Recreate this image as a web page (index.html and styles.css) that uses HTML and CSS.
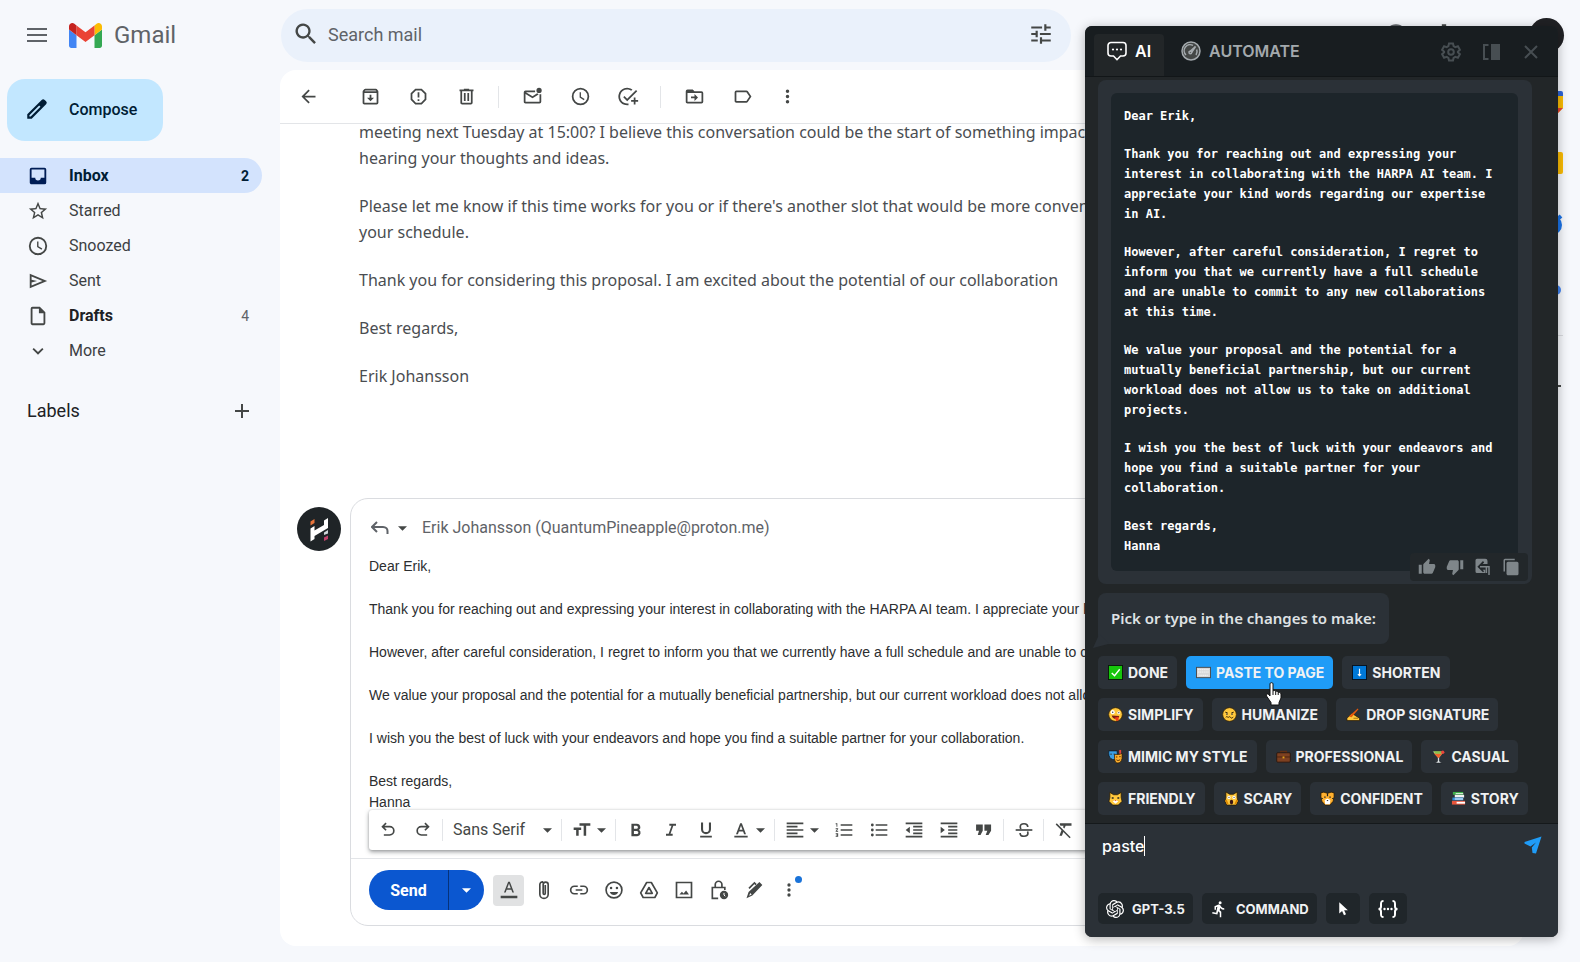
FILE: index.html
```html
<!DOCTYPE html>
<html lang="en">
<head>
<meta charset="utf-8">
<title>Gmail</title>
<link rel="stylesheet" href="styles.css">
</head>
<body>
<svg class="sprite" aria-hidden="true">
  <symbol id="caret" viewBox="0 0 10 5"><path d="M0 0h10L5 5z"/></symbol>
  <symbol id="clock" viewBox="0 0 24 24"><path d="M12 2a10 10 0 1 0 0 20 10 10 0 0 0 0-20zm0 18a8 8 0 1 1 0-16 8 8 0 0 1 0 16zm.5-13H11v6l4.8 3.2.9-1.4-4.2-2.5z"/></symbol>
  <symbol id="more" viewBox="0 0 24 24"><path d="M12 8a2 2 0 1 0 0-4 2 2 0 0 0 0 4zm0 2a2 2 0 1 0 0 4 2 2 0 0 0 0-4zm0 6a2 2 0 1 0 0 4 2 2 0 0 0 0-4z"/></symbol>
  <symbol id="thumb" viewBox="0 0 24 24"><path d="M1 21h4V9H1zm22-11c0-1.1-.9-2-2-2h-6.3l.95-4.6.03-.3c0-.4-.17-.8-.44-1.1L14.2 1 7.6 7.6C7.2 7.9 7 8.4 7 9v10c0 1.1.9 2 2 2h9c.8 0 1.5-.5 1.8-1.2l3-7c.1-.3.2-.5.2-.8z"/></symbol>
</svg>

<div class="app">
  <header class="topbar">
    <div class="brand">
      <button class="icon-btn menu-btn" aria-label="Main menu"><svg viewBox="0 0 20 14" width="20" height="14"><path d="M0 0h20v2H0zm0 6h20v2H0zm0 6h20v2H0z"/></svg></button>
      <svg class="gmail-logo" viewBox="52 42 88 66"><path fill="#4285f4" d="M58 108h14V74L52 59v43c0 3.3 2.7 6 6 6"/><path fill="#34a853" d="M120 108h14c3.3 0 6-2.7 6-6V59l-20 15"/><path fill="#fbbc04" d="M120 48v26l20-15v-8c0-7.4-8.5-11.7-14.4-7.2"/><path fill="#ea4335" d="M72 74V48l24 18 24-18v26L96 92"/><path fill="#c5221f" d="M52 51v8l20 15V48l-5.6-4.2C60.5 39.3 52 43.600 52 51"/></svg>
      <span class="brand-name">Gmail</span>
    </div>
    <div class="search">
      <svg viewBox="0 0 24 24" width="28" height="28"><path d="M15.5 14h-.8l-.3-.3A6.500 6.500 0 1 0 13.700 14.400l.3.3v.8l5 5 1.500-1.500zm-6 0a4.500 4.500 0 1 1 0-9 4.500 4.500 0 0 1 0 9z"/></svg>
      <input type="text" placeholder="Search mail" aria-label="Search mail">
      <button class="icon-btn" aria-label="Search options"><svg viewBox="0 0 24 24" width="26" height="26"><path d="M3 17v2h6v-2zM3 5v2h10V5zm10 16v-2h8v-2h-8v-2h-2v6zM7 9v2H3v2h4v2h2V9zm14 4v-2H11v2zm-6-4h2V7h4V5h-4V3h-2z"/></svg></button>
    </div>
    <div class="account">
      <svg viewBox="0 0 24 24" width="26" height="26"><circle cx="12" cy="12" r="9" fill="none" stroke="#5f6368" stroke-width="2"/><path d="M11 16h2v2h-2zM12 6a4 4 0 0 0-4 4h2a2 2 0 1 1 4 0c0 2-3 1.800-3 5h2c0-2.200 3-2.500 3-5a4 4 0 0 0-4-4z"/></svg>
      <svg viewBox="0 0 24 24" width="26" height="26"><path d="M10 2h4v3h-4zm0 17h4v3h-4z"/><circle cx="12" cy="12" r="6" fill="none" stroke="#5f6368" stroke-width="2"/></svg>
      <span class="account-photo"></span>
    </div>
  </header>

  <nav class="sidebar">
    <button class="compose"><svg viewBox="0 0 24 24" width="26" height="26"><path d="M20.400 4.900 19.100 3.600a2 2 0 0 0-2.800 0L3 16.900V21h4.100L20.400 7.700a2 2 0 0 0 0-2.800zM6.200 19H5v-1.200l9-9L15.200 10z"/></svg>Compose</button>
    <ul class="folders">
      <li><a class="folder active" href="#"><svg viewBox="0 0 24 24"><path d="M19 3H5a2 2 0 0 0-2 2v14c0 1.100.9 2 2 2h14a2 2 0 0 0 2-2V5a2 2 0 0 0-2-2zm0 11h-4a3 3 0 0 1-6 0H5V5h14z"/></svg><span>Inbox</span><b>2</b></a></li>
      <li><a class="folder" href="#"><svg viewBox="0 0 24 24"><path d="m22 9.200-7.200-.6L12 2 9.200 8.600 2 9.200l5.500 4.700L5.800 21 12 17.300 18.200 21l-1.600-7.100zM12 15.400l-3.800 2.300 1-4.300-3.300-2.900 4.400-.4L12 6.100l1.700 4 4.400.4-3.300 2.900 1 4.300z"/></svg><span>Starred</span></a></li>
      <li><a class="folder" href="#"><svg><use href="#clock"/></svg><span>Snoozed</span></a></li>
      <li><a class="folder" href="#"><svg viewBox="0 0 24 24"><path d="M3 4v16l19-8zm2 3 11.800 5L5 17v-3.500l6-1.500-6-1.500z"/></svg><span>Sent</span></a></li>
      <li><a class="folder strong" href="#"><svg viewBox="0 0 24 24"><path d="M14 2H6a2 2 0 0 0-2 2v16c0 1.100.9 2 2 2h12a2 2 0 0 0 2-2V8zm4 18H6V4h7v5h5z"/></svg><span>Drafts</span><b>4</b></a></li>
      <li><a class="folder" href="#"><svg viewBox="0 0 24 24"><path d="M16.600 8.600 12 13.200 7.400 8.600 6 10l6 6 6-6z"/></svg><span>More</span></a></li>
    </ul>
    <div class="labels"><h2>Labels</h2><button class="icon-btn" aria-label="Create new label"><svg viewBox="0 0 14 14" width="14" height="14"><path d="M6 0h2v6h6v2H8v6H6V8H0V6h6z"/></svg></button></div>
  </nav>

  <main class="thread">
    <div class="toolbar">
      <button class="tool back" aria-label="Back"><svg viewBox="0 0 24 24"><path d="M20 11H7.800l5.600-5.600L12 4l-8 8 8 8 1.400-1.400L7.800 13H20z"/></svg></button>
      <button class="tool" aria-label="Archive"><svg viewBox="0 0 24 24"><path d="m20.500 5.200-1.400-1.700A1.500 1.500 0 0 0 18 3H6c-.5 0-.9.200-1.200.6L3.500 5.200c-.3.400-.5.800-.5 1.300V19c0 1.100.9 2 2 2h14a2 2 0 0 0 2-2V6.500c0-.5-.2-.9-.5-1.300zM6.200 5h11.600l.8 1H5.400zM5 19V8h14v11zm6-9h2v3.500h3L12 17.500l-4-4h3z"/></svg></button>
      <button class="tool" aria-label="Report spam"><svg viewBox="0 0 24 24"><path d="M8.300 3h7.400L21 8.300v7.400L15.700 21H8.300L3 15.700V8.300zm.8 2L5 9.100v5.800L9.100 19h5.800l4.100-4.100V9.100L14.900 5zM11 7h2v6h-2zm0 8h2v2h-2z"/></svg></button>
      <button class="tool" aria-label="Delete"><svg viewBox="0 0 24 24"><path d="M15 4V3H9v1H4v2h1v13c0 1.100.9 2 2 2h10a2 2 0 0 0 2-2V6h1V4zm2 15H7V6h10zM9 8h2v9H9zm4 0h2v9h-2z"/></svg></button>
      <i class="rule"></i>
      <button class="tool" aria-label="Mark as unread"><svg viewBox="0 0 24 24"><path d="M15 5H4a2 2 0 0 0-2 2v11c0 1.100.9 2 2 2h16a2 2 0 0 0 2-2V9.500h-2V18H4V9l8 5 7-4.400-1.700-1.300L12 11.700 4.500 7H15z"/><circle cx="19.500" cy="5" r="3"/></svg></button>
      <button class="tool" aria-label="Snooze"><svg><use href="#clock"/></svg></button>
      <button class="tool" aria-label="Add to tasks"><svg viewBox="0 0 24 24"><path d="M10.500 20a8 8 0 1 1 4.600-14.500l1.400-1.400A10 10 0 1 0 12 21.900V20zM22 5.900 20.600 4.500 10.500 14.600 7.400 11.500 6 12.900l4.500 4.500zM18 13v3h-3v2h3v3h2v-3h3v-2h-3v-3z"/></svg></button>
      <i class="rule"></i>
      <button class="tool" aria-label="Move to"><svg viewBox="0 0 24 24"><path d="M20 6h-8l-2-2H4a2 2 0 0 0-2 2v12c0 1.100.9 2 2 2h16a2 2 0 0 0 2-2V8a2 2 0 0 0-2-2zm0 12H4V8h16zm-8-1 4-4-4-4v3H8v2h4z"/></svg></button>
      <button class="tool" aria-label="Labels"><svg viewBox="0 0 24 24"><path d="M16.500 5H5a2 2 0 0 0-2 2v10c0 1.100.9 2 2 2h11.500c.6 0 1.100-.3 1.500-.8l4.200-6.200L18 5.800c-.4-.5-.9-.8-1.500-.8zm0 12H5V7h11.500l3.400 5z"/></svg></button>
      <button class="tool last" aria-label="More"><svg><use href="#more"/></svg></button>
    </div>

    <div class="scroll">
      <article class="message">
        <p>meeting next Tuesday at 15:00? I believe this conversation could be the start of something impactful<br>hearing your thoughts and ideas.</p>
        <p>Please let me know if this time works for you or if there's another slot that would be more convenient<br>your schedule.</p>
        <p>Thank you for considering this proposal. I am excited about the potential of our collaboration</p>
        <p>Best regards,</p>
        <p>Erik Johansson</p>
      </article>

      <section class="reply-row">
        <svg class="avatar" viewBox="0 0 44 44"><circle cx="22" cy="22" r="22" fill="#1f2427"/><path d="M13.500 14.500 17.500 12v4l-4 2.500z" fill="#e8743b"/><path d="M13.500 21.500 17.500 19v4.500L27 18v-4.500l4-2.500V21l-13.500 8v3l-4 2.500z" fill="#fff"/><path d="M27 25.500 31 23v3.500L27 28z" fill="#cfd6da"/><path d="M27 30.500 31 28.500v3.500L27 34z" fill="#c2406b"/></svg>
        <div class="reply">
          <div class="recipient">
            <button class="icon-btn reply-type" aria-label="Type of response"><svg viewBox="0 0 18 14" width="18" height="14"><path d="M6 1 1 6l5 5M1.500 6H12c3 0 4.500 2 4.500 4v3" fill="none" stroke="#5f6368" stroke-width="2"/></svg><svg class="caret"><use href="#caret"/></svg></button>
            <span>Erik Johansson (QuantumPineapple@proton.me)</span>
          </div>
          <div class="draft">
            <p>Dear Erik,</p>
            <p>Thank you for reaching out and expressing your interest in collaborating with the HARPA AI team. I appreciate your kind words regarding our expertise in AI.</p>
            <p>However, after careful consideration, I regret to inform you that we currently have a full schedule and are unable to commit to any new collaborations.</p>
            <p>We value your proposal and the potential for a mutually beneficial partnership, but our current workload does not allow us to take on projects.</p>
            <p>I wish you the best of luck with your endeavors and hope you find a suitable partner for your collaboration.</p>
            <p>Best regards,<br>Hanna</p>
          </div>
          <div class="format-wrap">
          <div class="format">
            <button class="fmt" aria-label="Undo"><svg viewBox="0 0 24 24"><path d="M7 19v-2h7a4 4 0 0 0 0-8H7.800l2.600 2.600L9 13 4 8l5-5 1.400 1.400L7.800 7H14a6 6 0 0 1 0 12z"/></svg></button>
            <button class="fmt" aria-label="Redo"><svg viewBox="0 0 24 24"><path d="M17 19v-2h-7a4 4 0 0 1 0-8h6.200l-2.600 2.600L15 13l5-5-5-5-1.400 1.400L16.200 7H10a6 6 0 0 0 0 12z"/></svg></button>
            <i class="fmt-rule"></i>
            <label class="font-pick"><select aria-label="Font"><option>Sans Serif</option></select><svg class="caret"><use href="#caret"/></svg></label>
            <i class="fmt-rule"></i>
            <button class="fmt wide" aria-label="Size"><svg viewBox="0 0 24 24"><path d="M9 4v3h5v12h3V7h5V4zM2 12h3v7h3v-7h3V9H2z"/></svg><svg class="caret"><use href="#caret"/></svg></button>
            <i class="fmt-rule"></i>
            <button class="fmt" aria-label="Bold"><svg viewBox="0 0 24 24"><path d="M15.600 11.800c1-.7 1.600-1.800 1.600-2.800A4.500 4.500 0 0 0 12.800 4.500H6.500v15h7a4.200 4.200 0 0 0 2.100-7.700zM9.500 7h3a1.800 1.800 0 0 1 0 3.600h-3zm3.500 9.800H9.500v-3.700H13a1.850 1.850 0 0 1 0 3.700z"/></svg></button>
            <button class="fmt" aria-label="Italic"><svg viewBox="0 0 24 24"><path d="M10 4.500V7h2.600l-3.400 9.500H6V19h8v-2.500h-2.600L14.800 7H18V4.500z"/></svg></button>
            <button class="fmt" aria-label="Underline"><svg viewBox="0 0 24 24"><path d="M12 17a6 6 0 0 0 6-6V3h-2.500v8a3.500 3.500 0 0 1-7 0V3H6v8a6 6 0 0 0 6 6zm-7 2v2h14v-2z"/></svg></button>
            <button class="fmt wide" aria-label="Text colour"><svg viewBox="0 0 24 24"><path d="M4 19h16v2H4zM11 4 6 17h2.300l1.200-3.200h5L15.700 17H18L13 4zm-.8 7.800L12 6.900l1.800 4.900z"/></svg><svg class="caret"><use href="#caret"/></svg></button>
            <i class="fmt-rule"></i>
            <button class="fmt wide" aria-label="Align"><svg viewBox="0 0 24 24"><path d="M2 3h20v2H2zm0 4h13v2H2zm0 4h20v2H2zm0 4h13v2H2zm0 4h20v2H2z"/></svg><svg class="caret"><use href="#caret"/></svg></button>
            <button class="fmt" aria-label="Numbered list"><svg viewBox="0 0 24 24"><path d="M2 17h2v.5H3v1h1v.5H2v1h3v-4H2zm1-9h1V4H2v1h1zm-1 3h1.800L2 13.100v.9h3v-1H3.200L5 10.900V10H2zm6-6v2h14V5zm0 14h14v-2H8zm0-6h14v-2H8z"/></svg></button>
            <button class="fmt" aria-label="Bulleted list"><svg viewBox="0 0 24 24"><path d="M8 5h14v2H8zm0 6h14v2H8zm0 6h14v2H8z"/><circle cx="4" cy="6" r="1.700"/><circle cx="4" cy="12" r="1.700"/><circle cx="4" cy="18" r="1.700"/></svg></button>
            <button class="fmt" aria-label="Indent less"><svg viewBox="0 0 24 24"><path d="M2 3h20v2H2zm9 4h11v2H11zm0 4h11v2H11zm0 4h11v2H11zm-9 4h20v2H2zM2 12l5 4V8z"/></svg></button>
            <button class="fmt" aria-label="Indent more"><svg viewBox="0 0 24 24"><path d="M2 3h20v2H2zm9 4h11v2H11zm0 4h11v2H11zm0 4h11v2H11zm-9 4h20v2H2zM7 12 2 8v8z"/></svg></button>
            <button class="fmt" aria-label="Quote"><svg viewBox="0 0 24 24"><path d="M4.500 18h3.300l2.700-5V5.500h-8V13H6zm9.500 0h3.300l3.200-5V5.500h-8V13H16z"/></svg></button>
            <i class="fmt-rule"></i>
            <button class="fmt" aria-label="Strikethrough"><svg viewBox="0 0 24 24"><path d="M2 11h20v2H2z"/><path d="M16.500 8.500C16.500 6 14.500 4.500 12 4.500S7.500 6 7.500 8.300c0 1 .4 1.800 1.100 2.400M7.300 15.500c0 2.500 2.200 4 4.700 4s4.700-1.300 4.700-3.600c0-.8-.2-1.500-.6-2" fill="none" stroke="#444746" stroke-width="2"/></svg></button>
            <i class="fmt-rule"></i>
            <button class="fmt" aria-label="Remove formatting"><svg viewBox="0 0 24 24"><path d="M7 4v2l1 1h3.500l-.7 1.700 1.700 1.600L14 7h7V4zM3.300 4 2 5.300l7 7L6.500 19h3l1.700-4.500 7.500 7.500 1.300-1.300z"/></svg></button>
          </div>
          </div>
          <div class="actions">
            <div class="send-group"><button class="send">Send</button><button class="send-more" aria-label="More send options"><svg class="caret"><use href="#caret"/></svg></button></div>
            <button class="act on" aria-label="Formatting options"><svg viewBox="0 0 24 24"><path d="M2 19h20v3H2zM11 2 6 15h2l1.200-3.200h5.600L16 15h2L13 2zm-1.100 8L12 4.300l2.100 5.700z"/></svg></button>
            <button class="act" aria-label="Attach files"><svg viewBox="0 0 24 24"><path d="M7 6v11a5 5 0 0 0 10 0V6M17 7V5.500a3 3 0 0 0-6 0V16a1.200 1.200 0 0 0 2.500 0V6M7 7V5.500A3.500 3.500 0 0 1 11 2.200" fill="none" stroke="#444746" stroke-width="2"/></svg></button>
            <button class="act" aria-label="Insert link"><svg viewBox="0 0 24 24"><path d="M10.500 7.500H6.500a4.500 4.500 0 0 0 0 9h4M13.500 7.500h4a4.500 4.500 0 0 1 0 9h-4M8 12h8" fill="none" stroke="#444746" stroke-width="2"/></svg></button>
            <button class="act" aria-label="Insert emoji"><svg viewBox="0 0 24 24"><circle cx="12" cy="12" r="9.500" fill="none" stroke="#444746" stroke-width="2"/><circle cx="8.500" cy="9.500" r="1.500"/><circle cx="15.500" cy="9.500" r="1.500"/><path d="M12 18c2.300 0 4.300-1.500 5-3.700H7A5.400 5.400 0 0 0 12 18z"/></svg></button>
            <button class="act" aria-label="Insert from Drive"><svg viewBox="0 0 24 24"><path d="M9.200 3h5.600L22 15.500 19 21H5l-3-5.500zM12 9l-4 7h8z" fill="none" stroke="#444746" stroke-width="2" stroke-linejoin="round"/></svg></button>
            <button class="act" aria-label="Insert photo"><svg viewBox="0 0 24 24"><path d="M3 3h18v18H3z" fill="none" stroke="#444746" stroke-width="2"/><path d="M6.500 17.500 9.500 14l2 2.200 3-3.700 3.500 5z"/></svg></button>
            <button class="act" aria-label="Confidential mode"><svg viewBox="0 0 24 24"><path d="M11 22H4V9h15v3M7.500 9V5.500a4 4 0 0 1 8 0V9" fill="none" stroke="#444746" stroke-width="2"/><circle cx="18" cy="18" r="5"/><path d="M18 15.500V18l1.500 1.500" fill="none" stroke="#fff" stroke-width="1.200"/></svg></button>
            <button class="act" aria-label="Insert signature"><svg viewBox="0 0 24 24"><path d="m18.500 2.500 3.500 3.500-12 12.500L3 22l2.500-7.500zM7.500 15.500l-1.300 3.300 3-1.300z" fill-rule="evenodd"/><path d="M6 10l6.500-6.500 2 2" fill="none" stroke="#444746" stroke-width="2"/></svg></button>
            <button class="act" aria-label="More options"><svg><use href="#more"/></svg><i class="dot"></i></button>
          </div>
        </div>
      </section>
    </div>
  </main>

  <aside class="rail">
    <svg viewBox="0 0 22 22"><path fill="#fbbc04" d="M0 4h22v13l-5 5H0z"/><path fill="#2f66d8" d="M0 0h20a2 2 0 0 1 2 2v3H0z"/><path fill="#ea4335" d="M17 22v-5h5z"/></svg>
    <svg viewBox="0 0 22 22"><rect width="22" height="22" rx="2" fill="#fbbc04"/></svg>
    <svg viewBox="0 0 22 22"><circle cx="11" cy="12" r="8" fill="none" stroke="#1a73e8" stroke-width="4"/><path d="M12 10l8-7" stroke="#1a73e8" stroke-width="4"/></svg>
    <svg class="person" viewBox="0 0 22 12"><rect y="1" width="20" height="10" rx="5" fill="#4285f4"/></svg>
    <hr>
    <svg viewBox="0 0 22 22"><path d="M10 2h2v8h8v2h-8v8h-2v-8H2v-2h8z"/></svg>
  </aside>
</div>

<section class="harpa" aria-label="HARPA AI">
  <header class="harpa-head">
    <button class="tab current"><svg viewBox="0 0 20 20"><path d="M4 1.500h12a3 3 0 0 1 3 3V12a3 3 0 0 1-3 3h-2.500L10 18.700 6.500 15H4a3 3 0 0 1-3-3V4.500a3 3 0 0 1 3-3z" fill="none" stroke="#fff" stroke-width="1.600"/><circle cx="6" cy="8.500" r="1.100" fill="#fff"/><circle cx="10" cy="8.500" r="1.100" fill="#fff"/><circle cx="14" cy="8.500" r="1.100" fill="#fff"/></svg>AI</button>
    <button class="tab"><svg viewBox="0 0 20 20" fill="none" stroke="#a3a9ad" stroke-width="1.500"><circle cx="10" cy="10" r="9"/><path d="M5 14A6 6 0 0 1 12 4.400M15.700 8.500a6 6 0 0 1-.7 5.500"/><path d="m8.500 10.800 6-5.300-4.300 6.700z" fill="#a3a9ad"/><circle cx="9.300" cy="11.500" r="1.300"/></svg>AUTOMATE</button>
    <div class="head-tools">
      <button class="head-btn" aria-label="Settings"><svg viewBox="0 0 20 20"><path d="M8 1.500h4l.6 2.600 1.700 1 2.600-.8 2 3.500-2 1.800v.8l2 1.800-2 3.500-2.600-.8-1.700 1-.6 2.600H8l-.6-2.600-1.700-1-2.600.8-2-3.500 2-1.800v-.8l-2-1.800 2-3.500 2.600.8 1.700-1z"/><circle cx="10" cy="10" r="2.800"/></svg></button>
      <button class="head-btn" aria-label="Dock to side"><svg viewBox="0 0 20 20"><path d="M7.500 3H3v14h4.500"/><path d="M11 3h7v14h-7z" fill="#474e52"/></svg></button>
      <button class="head-btn" aria-label="Close"><svg viewBox="0 0 20 20"><path d="m4 4 12 12M16 4 4 16"/></svg></button>
    </div>
  </header>

  <div class="chat">
    <div class="bubble">
      <div class="answer">
        <p>Dear Erik,</p>
        <p>Thank you for reaching out and expressing your<br>interest in collaborating with the HARPA AI team. I<br>appreciate your kind words regarding our expertise<br>in AI.</p>
        <p>However, after careful consideration, I regret to<br>inform you that we currently have a full schedule<br>and are unable to commit to any new collaborations<br>at this time.</p>
        <p>We value your proposal and the potential for a<br>mutually beneficial partnership, but our current<br>workload does not allow us to take on additional<br>projects.</p>
        <p>I wish you the best of luck with your endeavors and<br>hope you find a suitable partner for your<br>collaboration.</p>
        <p>Best regards,<br>Hanna</p>
      </div>
      <div class="answer-tools">
        <button aria-label="Good answer"><svg><use href="#thumb"/></svg></button>
        <button aria-label="Bad answer"><svg class="flip"><use href="#thumb"/></svg></button>
        <button aria-label="Insert"><svg viewBox="0 0 24 24"><path d="M4 1h11a3 3 0 0 1 3 3v4h-6.500l2-2L12 4 4.500 11.500 12 19l1.500-1.500-2-2H15V20H4a2 2 0 0 1-2-2V3a2 2 0 0 1 2-2z"/><path d="M8 11.700h12v11M16.500 12v8" fill="none" stroke="#7f868a" stroke-width="2"/></svg></button>
        <button aria-label="Copy"><svg viewBox="0 0 24 24"><path d="M17 1H4a2 2 0 0 0-2 2v15h2V3h13zm3 4H8a2 2 0 0 0-2 2v14c0 1.100.9 2 2 2h12a2 2 0 0 0 2-2V7a2 2 0 0 0-2-2z"/></svg></button>
      </div>
    </div>

    <div class="prompt">Pick or type in the changes to make:</div>

    <div class="chips">
      <div class="chip-row">
        <button class="chip"><svg viewBox="0 0 16 16"><rect x=".5" y=".5" width="15" height="15" fill="#16c60c" stroke="#0a1a0a"/><path d="m4 8.500 3 3 5.500-7" fill="none" stroke="#fff" stroke-width="1.500"/></svg>DONE</button>
        <button class="chip hot"><svg viewBox="0 0 16 16"><rect x=".5" y="2.500" width="15" height="11" fill="#d9d9d9" stroke="#4a4a4a"/><path d="M2 5h12M2 7.500h12M3.500 11h9" stroke="#f7f7f7" stroke-dasharray="1.500 .5"/></svg>PASTE TO PAGE
          <svg class="pointer" viewBox="0 0 18 24"><path d="M5 1.800C5 .3 8 .3 8 1.800V9c.5-.8 2.600-.6 2.700.5.7-.6 2.400-.2 2.500 1 .8-.6 2.800-.1 2.800 1.500V16l-2 4.500V23H6v-2.500L1.500 14c-1-1.500.8-2.800 2-1.500L5 14z" fill="#fff" stroke="#111"/><path d="M8 9v4m2.700-3.500V13m2.500-2.500V13" stroke="#111" fill="none"/></svg></button>
        <button class="chip"><svg viewBox="0 0 16 16"><rect x=".5" y=".5" width="15" height="15" fill="#0078d7" stroke="#06121f"/><path d="M8 4v7M6.300 9.700 8 11.500l1.700-1.800" fill="none" stroke="#fff" stroke-width="1.200"/></svg>SHORTEN</button>
      </div>
      <div class="chip-row">
        <button class="chip"><svg viewBox="0 0 16 16"><circle cx="8" cy="8" r="7.300" fill="#ffc83d" stroke="#3b2600" stroke-width=".8"/><circle cx="5" cy="5.500" r="2.200" fill="#fff"/><circle cx="11.500" cy="6" r="1.600" fill="#fff"/><circle cx="5" cy="5.500" r=".8"/><circle cx="11.500" cy="6" r=".7"/><path d="M4 9l8 .5c-.5 2-1.500 3-3 3.200C6.500 13 4.500 11.500 4 9z" fill="#7a1c10"/><path d="M7 11.500l4-1 .5 3.500-2.500 1z" fill="#f03a17"/></svg>SIMPLIFY</button>
        <button class="chip"><svg viewBox="0 0 16 16"><circle cx="8" cy="8" r="7.300" fill="#ffc83d" stroke="#3b2600" stroke-width=".8"/><path d="M3.500 5.500 6 6.300M12.500 5.500 10 6.300M4 11c1-1.500 2 0 2.700 0s1.300-1.500 2.300 0 2 .8 3-.5" fill="none" stroke="#2b1c00"/><circle cx="5.300" cy="7.500" r=".9"/><circle cx="10.700" cy="7.500" r=".9"/></svg>HUMANIZE</button>
        <button class="chip"><svg viewBox="0 0 16 16"><path d="M1 14.500V12l5-5 3 1.500 5.500 3.500v2.500z" fill="#ffc83d" stroke="#2a1a00" stroke-width=".8"/><path d="M3 10 12.500 1.500l.8.800L6 11z" fill="#e8590c"/><path d="M8 12h5" stroke="#8a5a00" stroke-width=".8"/></svg>DROP SIGNATURE</button>
      </div>
      <div class="chip-row">
        <button class="chip"><svg viewBox="0 0 16 16"><path d="M.8 2h9v5.500C9 11 6.500 11.500 5 11.200 2.500 10.500.8 8 .8 5z" fill="#3aa0e8" stroke="#0b1a26" stroke-width=".8"/><path d="M7 5.500c2.500.8 5 .5 8-.8V10c-.5 3-2.500 5-4.500 5S7 13 7 10z" fill="#ffb02e" stroke="#2a1a00" stroke-width=".8"/><path d="M9 11.500c1 1 3 1 4-.5M8.500 8.500H10m2-.3h1.500M2.500 5.500H4m2 0h1" fill="none" stroke="#402300"/><path d="M13 1v4" stroke="#e8443b" stroke-width="2"/></svg>MIMIC MY STYLE</button>
        <button class="chip"><svg viewBox="0 0 16 16"><path d="M5 4.500v-2h6v2" fill="none" stroke="#5d2f16" stroke-width="1.400"/><rect x=".8" y="4" width="14.400" height="10" rx="1" fill="#7d4021" stroke="#20100a" stroke-width=".8"/><path d="M1 8.500h14" stroke="#4a2210"/><rect x="7" y="8" width="2" height="2" fill="#e3a21a"/></svg>PROFESSIONAL</button>
        <button class="chip"><svg viewBox="0 0 16 16"><path d="M1.500 2.500h12.500L9 9v4l2.500 2h-7L7 13V9z" fill="#e9eef0" stroke="#20242a" stroke-width=".7"/><path d="M3 4.500h9.500L8 9.800z" fill="#f4622a"/><path d="M2.500 2.500h9v2.500h-7z" fill="#8bc34a"/><circle cx="12.500" cy="3.500" r="1.800" fill="#e8443b"/></svg>CASUAL</button>
      </div>
      <div class="chip-row">
        <button class="chip"><svg viewBox="0 0 16 16"><path d="M2 1.500 6 4h4l4-2.500V7l1 4-4 4H5l-4-4 1-4z" fill="#ffc83d" stroke="#2a1a00" stroke-width=".8"/><path d="M4 7.500h2M10 7.500h2" stroke="#222" stroke-width="1.500"/><path d="M5 11l3-1.500 3 1.500-3 2.500z" fill="#fff"/><path d="M7 9.500h2L8 11z" fill="#e8443b"/></svg>FRIENDLY</button>
        <button class="chip"><svg viewBox="0 0 16 16"><path d="M2 1 6 3.500h4L14 1v6l1 4-2 4H3l-2-4 1-4z" fill="#ffc83d" stroke="#2a1a00" stroke-width=".8"/><circle cx="5.300" cy="6.800" r="1.700" fill="#fff"/><circle cx="10.700" cy="6.800" r="1.700" fill="#fff"/><circle cx="5.300" cy="6.800" r=".6"/><circle cx="10.700" cy="6.800" r=".6"/><ellipse cx="8" cy="11.800" rx="1.800" ry="2.600" fill="#3a1616"/><path d="M2 9.500 4 14M14 9.500 12 14" stroke="#e08a00" stroke-width="1.800"/></svg>SCARY</button>
        <button class="chip"><svg viewBox="0 0 16 16"><path d="M1 2l3-.8L8 2.500l4-1.300 3 .8v4l-1 5-3.500 4h-5L2 11 1 6z" fill="#ffb02e" stroke="#2a1a00" stroke-width=".8"/><path d="M5 9.500 8 8l3 1.500-.5 4.500h-5z" fill="#fff"/><path d="M4.500 6.500h1.500M10 6.500h1.500M8 2.500v3M1.500 8H3M13 8h1.500" stroke="#222" stroke-width="1.300"/><path d="M7 9.500h2L8 11z" fill="#222"/></svg>CONFIDENT</button>
        <button class="chip"><svg viewBox="0 0 16 16"><path d="M2 1h11v3H2z" fill="#3fae49"/><path d="M4 4h10v3H4z" fill="#f2f2f2"/><path d="M1.500 7H13v3H1.500z" fill="#2f8fdd"/><path d="M4 8h9v1H4zM5 2h8v1H5z" fill="#fff"/><path d="M1 10.500h14v4H1z" fill="#e8553b"/><path d="M6 11.500h9v2H6z" fill="#fff"/></svg>STORY</button>
      </div>
    </div>
  </div>

  <footer class="ask">
    <div class="ask-line"><input class="ask-input" type="text" value="paste" aria-label="Message">
      <button class="ask-send" aria-label="Send message"><svg viewBox="0 0 18 18"><path d="M17.500.500 12 17.500 8.500 17 7.800 11.500 12 6.500 6.500 10.500.500 7.500.500 6z" fill="#1f9cf7"/></svg></button></div>
    <div class="ask-tools">
      <button class="tool-chip"><svg viewBox="0 0 24 24"><path d="M22.282 9.821a5.985 5.985 0 0 0-.516-4.910 6.046 6.046 0 0 0-6.510-2.900A6.065 6.065 0 0 0 4.981 4.182a5.985 5.985 0 0 0-3.998 2.900 6.046 6.046 0 0 0 .743 7.097 5.980 5.980 0 0 0 .511 4.911 6.051 6.051 0 0 0 6.515 2.900A5.985 5.985 0 0 0 13.260 24a6.056 6.056 0 0 0 5.772-4.206 5.989 5.989 0 0 0 3.998-2.900 6.056 6.056 0 0 0-.748-7.073zm-9.022 12.608a4.476 4.476 0 0 1-2.876-1.041l.142-.080 4.778-2.758a.795.795 0 0 0 .393-.681v-6.737l2.020 1.169a.071.071 0 0 1 .038.052v5.583a4.504 4.504 0 0 1-4.495 4.494zm-9.661-4.125a4.471 4.471 0 0 1-.535-3.014l.142.085 4.783 2.758a.771.771 0 0 0 .781 0l5.843-3.369v2.332a.080.080 0 0 1-.033.062L9.740 19.950a4.499 4.499 0 0 1-6.141-1.646zM2.341 7.896a4.485 4.485 0 0 1 2.366-1.973V11.600a.766.766 0 0 0 .388.677l5.814 3.354-2.020 1.169a.076.076 0 0 1-.071 0l-4.830-2.787A4.504 4.504 0 0 1 2.341 7.872zm16.596 3.856L13.104 8.364 15.119 7.200a.076.076 0 0 1 .071 0l4.830 2.791a4.494 4.494 0 0 1-.677 8.104v-5.677a.790.790 0 0 0-.407-.667zm2.011-3.023l-.142-.085-4.774-2.782a.776.776 0 0 0-.785 0L9.409 9.230V6.897a.066.066 0 0 1 .028-.062l4.830-2.787a4.499 4.499 0 0 1 6.680 4.660zM8.307 12.863l-2.020-1.164a.080.080 0 0 1-.038-.057V6.074a4.499 4.499 0 0 1 7.376-3.454l-.142.081L8.704 5.459a.795.795 0 0 0-.393.681zm1.098-2.365l2.602-1.500 2.607 1.500v2.999l-2.597 1.500-2.607-1.500Z"/></svg>GPT-3.5</button>
      <button class="tool-chip"><svg viewBox="0 0 24 24"><path d="M13.500 5.500a2 2 0 1 0 0-4 2 2 0 0 0 0 4zM9.900 19.400l1-4.400 2.100 2v6h2v-7.500l-2.100-2 .6-3A7.300 7.300 0 0 0 19 13v-2a4.900 4.900 0 0 1-4.300-2.400l-1-1.600c-.4-.6-1-1-1.700-1-.3 0-.5.1-.8.100L6 8.300V13h2V9.600l1.800-.7L8.200 17l-4.900-1-.4 2z"/></svg>COMMAND</button>
      <button class="tool-chip" aria-label="Select element"><svg viewBox="0 0 24 24"><path d="M7 3v15l3.800-3.400 2.500 5.700 2.700-1.200-2.500-5.600h5z"/></svg></button>
      <button class="tool-chip" aria-label="Parameters"><svg class="braces" viewBox="0 0 22 20"><path d="M6.500 2C4 2 4 3 4 5v2.500C4 9 3.300 10 1.500 10 3.300 10 4 11 4 12.500V15c0 2 0 3 2.500 3M15.500 2C18 2 18 3 18 5v2.500c0 1.500.7 2.500 2.500 2.500-1.800 0-2.500 1-2.500 2.500V15c0 2 0 3-2.500 3" fill="none" stroke="#fff" stroke-width="2"/><circle cx="7.500" cy="10" r="1.200"/><circle cx="11" cy="10" r="1.200"/><circle cx="14.500" cy="10" r="1.200"/></svg></button>
    </div>
  </footer>
</section>
</body>
</html>
```
FILE: styles.css
```css
* { box-sizing: border-box; }
body {
  margin: 0;
  background: #f6f8fc;
  color: #3c4043;
  font-family: Roboto, "Liberation Sans", sans-serif;
  font-size: 16px;
  overflow: hidden;
}
button, input, select { font: inherit; color: inherit; border: 0; background: none; padding: 0; margin: 0; }
button { cursor: pointer; }
p, h2, ul { margin: 0; padding: 0; font-weight: inherit; }
a { color: inherit; text-decoration: none; }
svg { fill: #444746; flex: none; display: block; }
.sprite { position: absolute; width: 0; height: 0; }
.icon-btn { display: flex; align-items: center; justify-content: center; }
.caret { width: 9px; height: 5px; }

.app {
  display: grid;
  grid-template-columns: 280px minmax(0, 1fr) 56px;
  grid-template-rows: 70px minmax(0, 1fr);
  height: 100vh;
  padding-bottom: 16px;
}

/* Top bar */
.topbar { grid-column: 1 / -1; display: flex; align-items: center; }
.brand { width: 281px; display: flex; align-items: center; padding-left: 27px; }
.menu-btn { margin-right: 22px; }
.menu-btn svg { fill: #5f6368; }
.gmail-logo { width: 33px; height: 25px; }
.brand-name { margin-left: 12px; font-size: 24px; color: #5f6368; }
.search {
  display: flex;
  align-items: center;
  gap: 8px;
  width: 50%;
  height: 53px;
  padding: 0 17px 2px 11px;
  border-radius: 27px;
  background: #eaf1fb;
}
.search input { flex: 1; font-size: 18px; outline: 0; }
.search input::placeholder { color: #5f6368; opacity: 1; }
.account { flex: 1; display: flex; align-items: center; justify-content: flex-end; gap: 22px; padding-right: 16px; }
.account-photo { width: 35px; height: 35px; margin-left: 50px; border-radius: 50%; background: #202124; }

/* Sidebar */
.sidebar { padding: 9px 18px 0 0; }
.compose {
  display: flex;
  align-items: center;
  gap: 19px;
  height: 62px;
  margin: 0 0 17px 7px;
  padding: 0 26px 2px 17px;
  border-radius: 18px;
  background: #c2e7ff;
  color: #001d35;
  font-weight: 500;
}
.compose svg { fill: #001d35; }
.folders { list-style: none; }
.folder {
  display: flex;
  align-items: center;
  height: 35px;
  padding: 0 13px 0 27px;
  border-radius: 0 18px 18px 0;
}
.folder svg { width: 22px; height: 22px; margin-right: 20px; }
.folder span { flex: 1; }
.folder b { font-size: 14px; font-weight: 400; }
.active { background: #d3e3fd; color: #001d35; font-weight: 700; }
.active svg { fill: #001d55; }
.active b { font-weight: 700; }
.strong { color: #202124; font-weight: 700; }
.strong b { color: #5f6368; }
.labels { display: flex; align-items: center; justify-content: space-between; padding: 31px 13px 0 27px; }
.labels h2 { font-size: 18px; line-height: 24px; color: #202124; }

/* Thread card */
.thread {
  display: flex;
  flex-direction: column;
  min-height: 0;
  border-radius: 16px;
  background: #fff;
  overflow: hidden;
}
.toolbar { display: flex; align-items: center; height: 54px; padding-left: 4px; border-bottom: 1px solid #e3e5e8; flex: none; }
.tool { width: 48px; height: 40px; display: flex; align-items: center; justify-content: center; }
.tool svg { width: 21px; height: 21px; }
.back { margin-right: 14px; }
.last { width: 42px; }
.rule { width: 1px; height: 22px; margin: 0 9px 0 8px; background: #e3e5e8; }
.scroll { flex: 1; min-height: 0; display: flex; flex-direction: column; overflow: hidden; padding-bottom: 20px; }
.message {
  margin-top: -5px;
  padding: 0 0 109px 79px;
  font: 16px/26px "Noto Sans", "Open Sans", sans-serif;
  color: #4a4d51;
  white-space: nowrap;
}
.message p + p { margin-top: 22px; }

/* Reply */
.reply-row { flex: 1; display: flex; gap: 9px; min-height: 0; padding: 0 20px 0 17px; }
.avatar { width: 44px; height: 44px; margin-top: 9px; }
.reply {
  flex: 1;
  min-width: 0;
  display: flex;
  flex-direction: column;
  border: 1px solid #dadce0;
  border-radius: 18px;
}
.recipient { display: flex; align-items: center; gap: 15px; padding: 18px 0 0 20px; line-height: 22px; color: #5f6368; }
.reply-type { gap: 9px; }
.draft {
  flex: 1;
  min-height: 0;
  overflow: hidden;
  padding: 17px 18px 0;
  font: 14px/21px "Liberation Sans", Arial, sans-serif;
  color: #2c2e30;
}
.draft p + p { margin-top: 22px; }
.format-wrap { padding: 0 12px 8px 18px; border-bottom: 1px solid #e3e5e8; }
.format {
  display: flex;
  align-items: center;
  height: 40px;
  padding-left: 1px;
  border-radius: 3px;
  background: #fff;
  box-shadow: 0 2px 4px rgba(60, 64, 67, .5), 0 0 2px rgba(60, 64, 67, .2);
}
.fmt { width: 35px; height: 32px; display: flex; align-items: center; justify-content: center; gap: 5px; }
.fmt svg { width: 20px; height: 20px; }
.fmt .caret, .font-pick .caret { width: 9px; height: 5px; }
.wide { width: 49px; }
.fmt-rule { width: 1px; height: 22px; margin: 0 2px; background: #e3e5e8; }
.font-pick { display: flex; align-items: center; padding: 0 7px 0 8px; }
.font-pick select { appearance: none; width: 90px; line-height: 22px; color: #444746; }

.actions { display: flex; align-items: center; padding: 11px 18px 15px; }
.send-group { display: flex; height: 40px; margin-right: 9px; border-radius: 20px; overflow: hidden; background: #0b57d0; color: #fff; }
.send { width: 79px; font-weight: 700; }
.send-more { width: 36px; display: flex; align-items: center; justify-content: center; border-left: 1px solid #06327a; }
.send-more svg { fill: #fff; }
.act { position: relative; width: 35px; height: 31px; display: flex; align-items: center; justify-content: center; }
.act svg { width: 20px; height: 20px; }
.on { width: 31px; margin-right: 2px; border-radius: 4px; background: #e1e2e3; }
.dot { position: absolute; top: 1px; right: 4px; width: 7px; height: 7px; border-radius: 50%; background: #1a73d9; }

/* Side rail */
.rail { display: flex; flex-direction: column; align-items: center; gap: 39px; padding-top: 21px; }
.rail svg { width: 22px; height: 22px; }
.rail .person { height: 12px; margin-top: 10px; }
.rail hr { width: 22px; margin: 0; border: 0; border-top: 1px solid #dadce0; }

/* Floating assistant */
.harpa {
  position: absolute;
  top: 26px;
  right: 22px;
  bottom: 25px;
  width: 473px;
  display: flex;
  flex-direction: column;
  border-radius: 7px;
  overflow: hidden;
  background: #222628;
  box-shadow: 0 2px 12px rgba(0, 0, 0, .3);
  color: #f0f2f3;
  font-family: Inter, "Open Sans", sans-serif;
}
.harpa-head { display: flex; height: 51px; padding: 8px 9px 0; background: #181d20; border-bottom: 1px solid #121618; }
.tab { display: flex; align-items: center; gap: 8px; padding: 0 13px 8px; color: #a3a9ad; font-weight: 600; }
.tab svg { width: 20px; height: 20px; }
.tab + .tab { margin-left: 4px; }
.current { background: #222628; border-radius: 4px 4px 0 0; color: #fff; }
.head-tools { margin-left: auto; display: flex; align-items: center; gap: 20px; padding: 0 8px 7px 0; }
.head-btn svg { width: 20px; height: 20px; fill: none; stroke: #474e52; stroke-width: 2; }

.chat { flex: 1; min-height: 0; padding: 3px 13px 0; }
.bubble { position: relative; width: 434px; padding: 13px 14px 13px 13px; border-radius: 8px; background: #2b3137; }
.answer {
  padding: 13px 13px 15px;
  border-radius: 6px;
  background: #1d252a;
  color: #fff;
  font: 700 12px/20px "DejaVu Sans Mono", "Liberation Mono", monospace;
  white-space: nowrap;
}
.answer p + p { margin-top: 18px; }
.answer-tools {
  position: absolute;
  right: 4px;
  bottom: 3px;
  display: flex;
  gap: 10px;
  padding: 5px 8px;
  border-radius: 4px;
  background: #22272a;
}
.answer-tools svg { width: 18px; height: 18px; fill: #7f868a; }
.flip { transform: rotate(180deg); }
.prompt {
  position: relative;
  width: max-content;
  margin-top: 9px;
  padding: 13px 13px 14px;
  border-radius: 8px;
  background: #2b3137;
  font: 600 15px/24px "Noto Sans", "Open Sans", sans-serif;
  color: #dfe2e4;
}
.prompt::before {
  content: "";
  position: absolute;
  left: -5px;
  bottom: -4px;
  width: 16px;
  height: 14px;
  background: #2b3137;
  clip-path: polygon(0 100%, 100% 70%, 40% 0);
}
.chips { display: flex; flex-direction: column; gap: 9px; margin-top: 12px; }
.chip-row { display: flex; gap: 9px; }
.chip {
  position: relative;
  display: flex;
  align-items: center;
  gap: 5px;
  height: 33px;
  padding: 0 9px 0 10px;
  border-radius: 5px;
  background: #2b3137;
  font-size: 14px;
  font-weight: 700;
  white-space: nowrap;
}
.chip svg { width: 15px; height: 15px; }
.hot { background: #1f9cf7; z-index: 1; }
.chip .pointer { position: absolute; left: 79px; top: 26px; width: 18px; height: 24px; }

.ask { padding: 9px 13px 13px; background: #2b3137; border-top: 1px solid #15191b; }
.ask-line { display: flex; justify-content: space-between; align-items: flex-start; padding: 3px 3px 0 4px; height: 60px; }
.ask-input { field-sizing: content; height: 20px; border-right: 1px solid #fff; font-weight: 500; color: #fff; outline: 0; }
.ask-send svg { width: 18px; height: 18px; }
.ask-tools { display: flex; gap: 9px; }
.tool-chip {
  display: flex;
  align-items: center;
  gap: 8px;
  height: 31px;
  padding: 0 8px;
  border-radius: 5px;
  background: #20262a;
  font-size: 13px;
  font-weight: 700;
}
.tool-chip svg { width: 18px; height: 18px; fill: #fff; }
.tool-chip .braces { width: 22px; height: 20px; }
```
